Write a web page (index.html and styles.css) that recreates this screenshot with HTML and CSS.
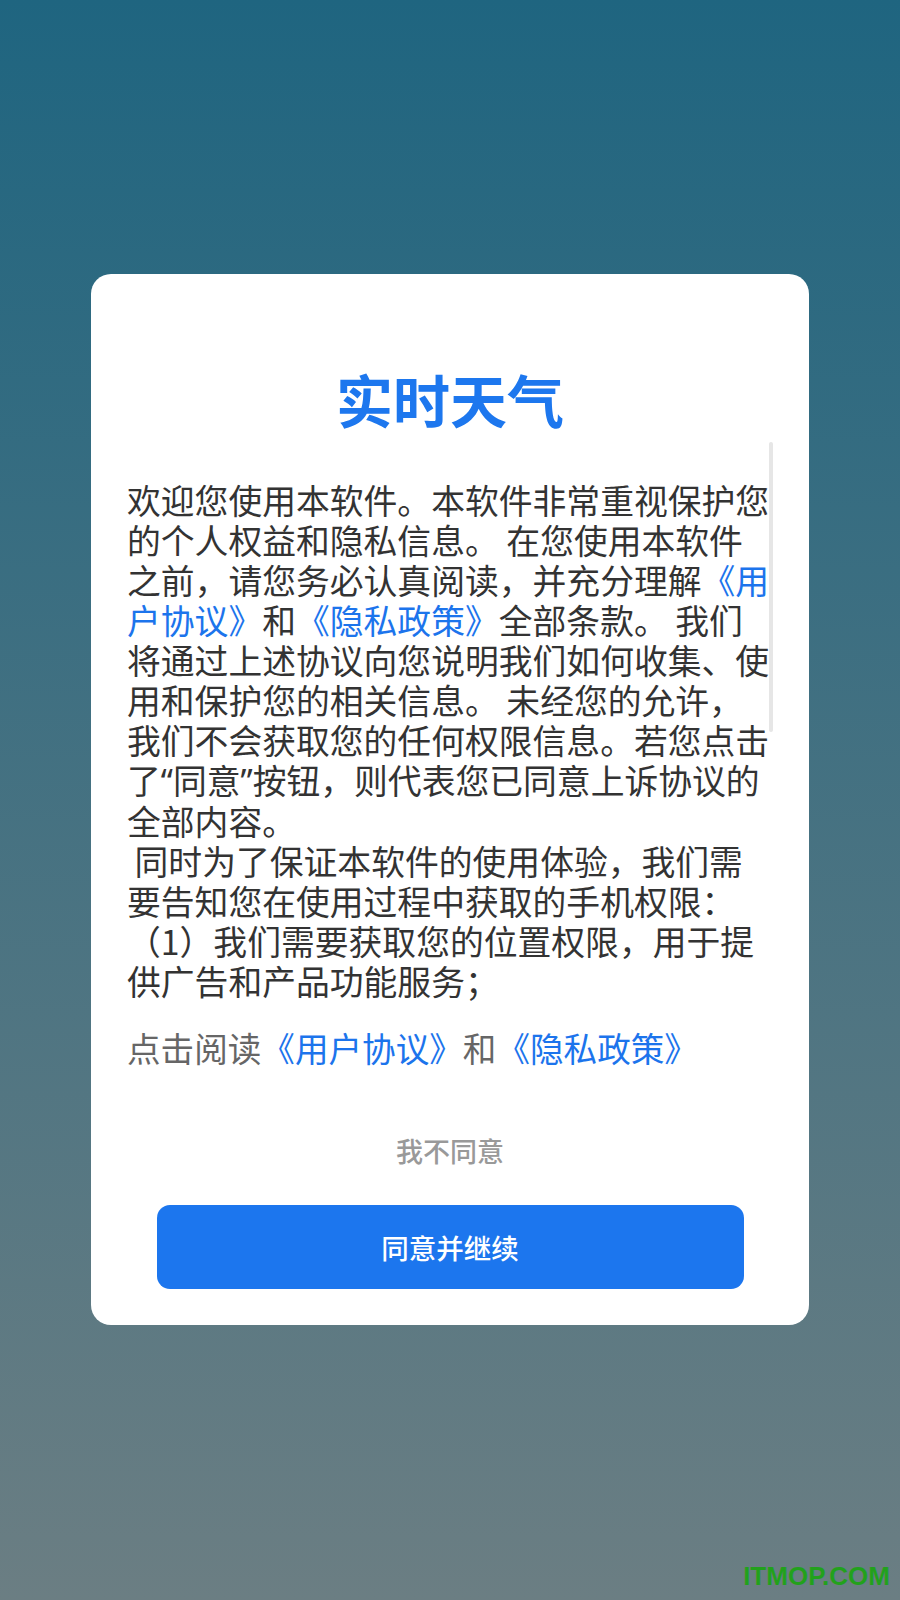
FILE: index.html
```html
<!DOCTYPE html>
<html lang="zh-CN">
<head>
    <meta charset="UTF-8">
    <meta name="viewport" content="width=device-width, initial-scale=1.0">
    <title>实时天气</title>

    <link rel="stylesheet" href="styles.css">

</head>
<body>
    <div class="dialog">
        <h1 class="title">实时天气</h1>

        <div class="scroll">
            <p class="notice">欢迎您使用本软件。本软件非常重视保护您的个人权益和隐私信息。 在您使用本软件之前，请您务必认真阅读，并充分理解<a href="#">《用户协议》</a>和<a href="#">《隐私政策》</a>全部条款。 我们将通过上述协议向您说明我们如何收集、使用和保护您的相关信息。 未经您的允许，我们不会获取您的任何权限信息。若您点击了<span class="q">“</span>同意<span class="q">”</span>按钮，则代表您已同意上诉协议的全部内容。<br>&nbsp;同时为了保证本软件的使用体验，我们需要告知您在使用过程中获取的手机权限：<br>（1）我们需要获取您的位置权限，用于提供广告和产品功能服务；</p>
            <div class="thumb"></div>
        </div>

        <p class="links">点击阅读<a href="#">《用户协议》</a>和<a href="#">《隐私政策》</a></p>

        <div class="refuse">我不同意</div>
        <button class="agree">同意并继续</button>
    </div>

    <div class="mark">ITMOP.COM</div>
</body>
</html>
```

FILE: styles.css
```css
*{
    margin: 0;
    padding: 0;
    box-sizing: border-box;
}

html, body{
    height: 1600px;
}

body{
    position: relative;
    background: linear-gradient(#1f6580, #6b7e83);
    font-family: "Noto Sans CJK SC", "Noto Sans", sans-serif;
    padding-top: 274px;
    overflow: hidden;
}

.dialog{
    width: 718px;
    margin: 0 auto;
    background: #fff;
    border-radius: 20px;
    padding: 89px 0 36px;
}

.title{
    text-align: center;
    color: #1d77ee;
    font-size: 57px;
    font-weight: 700;
    line-height: 70px;
    margin-bottom: 9px;
}

.scroll{
    position: relative;
    padding: 38px 37px 0 36px;
}

.notice{
    font-size: 33.8px;
    line-height: 40px;
    color: #333;
}

/* narrow western quotes like the app font */
.q{
    font-family: "Noto Sans", sans-serif;
}

a{
    color: #1c74ec;
    text-decoration: none;
}

/* scrollbar thumb of the text area */
.thumb{
    position: absolute;
    top: 0;
    right: 36px;
    width: 4px;
    height: 290px;
    border-radius: 2px;
    background: #e6e6e6;
}

.links{
    padding: 0 36px;
    margin-top: 27px;
    font-size: 33.6px;
    line-height: 40px;
    color: #666;
}

.refuse{
    margin-top: 63px;
    text-align: center;
    font-size: 27px;
    font-weight: 500;
    line-height: 40px;
    color: #999;
}

.agree{
    display: block;
    width: 587px;
    height: 84px;
    margin: 34px auto 0;
    border: none;
    border-radius: 13px;
    background: #1c76ee;
    color: #fff;
    font-family: inherit;
    font-size: 27.5px;
    font-weight: 500;
}

.mark{
    position: absolute;
    right: 10px;
    bottom: 8px;
    font-family: "Liberation Sans", Arial, sans-serif;
    font-weight: 700;
    font-size: 26px;
    color: #22a11c;
}
```
